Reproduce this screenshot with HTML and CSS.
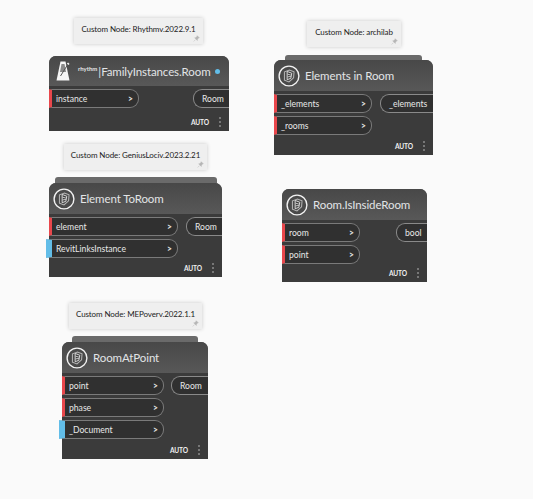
FILE: index.html
```html
<!DOCTYPE html>
<html lang="en">
<head>
    <meta charset="UTF-8">
    <meta name="viewport" content="width=device-width, initial-scale=1.0">
    <title>Room nodes</title>
    <link rel="stylesheet" href="styles.css">
</head>
<body>
    <svg class="defs" width="0" height="0">
        <symbol id="customIcon" viewBox="0 0 24 24">
            <circle cx="12" cy="12" r="10.8" fill="#4a4a4a" stroke="#f2f2f2" stroke-width="1.5"/>
            <path d="M7 7.5 L12.5 5.5 L17.5 7.5 L17 14 L12 18.5 L7 16.5 Z" fill="none" stroke="#b8b8b8" stroke-width="1.1"/>
            <path d="M10 7 L15 9 L14 14.5 L10 16 Z" fill="#3a3a3a" stroke="#e4e4e4" stroke-width="1"/>
            <path d="M10.5 10 L14 11 M10.5 13 L14 12.5" stroke="#e4e4e4" stroke-width="0.9"/>
        </symbol>
        <symbol id="pin" viewBox="0 0 10 10">
            <path d="M6 1 L9 4 L7.6 4.4 L6.2 6.6 L6.2 7.8 L2.4 4 L3.6 3.8 L5.6 2.4 Z M3.6 6.6 L1 9.2" fill="#b5b5b5" stroke="#b5b5b5" stroke-width="0.7"/>
        </symbol>
    </svg>

    <!-- Notes -->
    <div class="note note-rhythm">Custom Node: Rhythmv.2022.9.1<svg class="pin"><use href="#pin"/></svg></div>
    <div class="note note-archilab">Custom Node: archilab<svg class="pin"><use href="#pin"/></svg></div>
    <div class="note note-genius">Custom Node: GeniusLociv.2023.2.21<svg class="pin"><use href="#pin"/></svg></div>
    <div class="note note-mep">Custom Node: MEPoverv.2022.1.1<svg class="pin"><use href="#pin"/></svg></div>

    <!-- Nodes -->
    <div class="node node-rhythm">
        <div class="node-header">
            <svg class="metronome" viewBox="0 0 14 20">
                <path d="M4.5 0.5 L9.5 0.5 L13.5 19.5 L0.5 19.5 Z" fill="#f6f6f6"/>
                <path d="M5.5 3 L8.5 3 L10 11 L4 11 Z" fill="#8a8a8a"/>
                <path d="M4.5 15 L12 3" stroke="#555555" stroke-width="1"/>
                <path d="M11.5 2 L13 3.5" stroke="#f6f6f6" stroke-width="1.6"/>
            </svg>
            <span class="brand">rhythm</span>
            <span class="node-title">|FamilyInstances.Room</span>
            <span class="info-dot"></span>
        </div>
        <div class="node-body">
            <div class="inputs">
                <div class="port"><span>instance</span><b>&gt;</b></div>
            </div>
            <div class="output">Room</div>
        </div>
        <div class="node-footer"><span>AUTO</span><i class="dots"></i></div>
    </div>

    <div class="stack stack-archilab"></div>
    <div class="node node-archilab">
        <div class="node-header">
            <svg class="icon"><use href="#customIcon"/></svg>
            <span class="node-title">Elements in Room</span>
        </div>
        <div class="node-body">
            <div class="inputs">
                <div class="port"><span>_elements</span><b>&gt;</b></div>
                <div class="port"><span>_rooms</span><b>&gt;</b></div>
            </div>
            <div class="output">_elements</div>
        </div>
        <div class="node-footer"><span>AUTO</span><i class="dots"></i></div>
    </div>

    <div class="stack stack-genius"></div>
    <div class="node node-genius">
        <div class="node-header">
            <svg class="icon"><use href="#customIcon"/></svg>
            <span class="node-title">Element ToRoom</span>
        </div>
        <div class="node-body">
            <div class="inputs">
                <div class="port"><span>element</span><b>&gt;</b></div>
                <div class="port optional"><span>RevitLinksInstance</span><b>&gt;</b></div>
            </div>
            <div class="output">Room</div>
        </div>
        <div class="node-footer"><span>AUTO</span><i class="dots"></i></div>
    </div>

    <div class="node node-inside">
        <div class="node-header">
            <svg class="icon"><use href="#customIcon"/></svg>
            <span class="node-title">Room.IsInsideRoom</span>
        </div>
        <div class="node-body">
            <div class="inputs">
                <div class="port"><span>room</span><b>&gt;</b></div>
                <div class="port"><span>point</span><b>&gt;</b></div>
            </div>
            <div class="output">bool</div>
        </div>
        <div class="node-footer"><span>AUTO</span><i class="dots"></i></div>
    </div>

    <div class="stack stack-mep"></div>
    <div class="node node-mep">
        <div class="node-header">
            <svg class="icon"><use href="#customIcon"/></svg>
            <span class="node-title">RoomAtPoint</span>
        </div>
        <div class="node-body">
            <div class="inputs">
                <div class="port"><span>point</span><b>&gt;</b></div>
                <div class="port"><span>phase</span><b>&gt;</b></div>
                <div class="port optional"><span>_Document</span><b>&gt;</b></div>
            </div>
            <div class="output">Room</div>
        </div>
        <div class="node-footer"><span>AUTO</span><i class="dots"></i></div>
    </div>
</body>
</html>
```

FILE: styles.css
```css
body {
    margin: 0;
    width: 533px;
    height: 499px;
    position: relative;
    overflow: hidden;
    background-color: #fafafa;
    font-family: Lato, sans-serif;
}
.defs {
    position: absolute;
}

/* notes */
.note {
    position: absolute;
    box-sizing: border-box;
    height: 26px;
    padding-top: 5px;
    text-align: center;
    font-size: 8px;
    letter-spacing: -0.1px;
    line-height: 12px;
    color: #222222;
    background-color: #efefef;
    box-shadow: 0 0 4px rgba(0, 0, 0, 0.2);
    white-space: nowrap;
}
.pin {
    position: absolute;
    right: 3px;
    bottom: 2px;
    width: 7px;
    height: 7px;
}
.note-rhythm { left: 74px; top: 18px; width: 129px; }
.note-archilab { left: 307px; top: 21px; width: 94px; }
.note-genius { left: 64px; top: 144px; width: 143px; }
.note-mep { left: 69px; top: 303px; width: 133px; }

/* frozen stack edge above some nodes */
.stack {
    position: absolute;
    height: 6px;
    border-radius: 3px 3px 0 0;
    background-color: #6a6a6a;
}
.stack-archilab { left: 285px; top: 55px; width: 137px; }
.stack-genius { left: 55px; top: 177px; width: 162px; }
.stack-mep { left: 72px; top: 336px; width: 126px; }

/* nodes */
.node {
    position: absolute;
    display: flex;
    flex-direction: column;
    box-sizing: border-box;
    background-color: #3b3b3b;
    border-radius: 7px 7px 0 0;
    color: #f0f0f0;
}
.node-rhythm { left: 49px; top: 56px; width: 180px; height: 75px; }
.node-archilab { left: 274px; top: 60px; width: 159px; height: 95px; }
.node-genius { left: 49px; top: 183px; width: 173px; height: 94px; }
.node-inside { left: 282px; top: 189px; width: 145px; height: 93px; }
.node-mep { left: 62px; top: 342px; width: 146px; height: 117px; }

.node-header {
    display: flex;
    align-items: center;
    flex: none;
    height: 31px;
    padding-left: 4px;
    background: linear-gradient(#484848, #585858);
    border-radius: 7px 7px 0 0;
}
.node-rhythm .node-header {
    height: 30px;
}
.node-title {
    font-size: 11.5px;
    letter-spacing: -0.1px;
    color: #e2e4e6;
    white-space: nowrap;
}
.icon {
    flex: none;
    width: 22px;
    height: 22px;
    margin-right: 5px;
}
.metronome {
    flex: none;
    width: 14px;
    height: 20px;
    margin: 0 8px 0 3px;
}
.brand {
    font-size: 6px;
    font-weight: 700;
    margin: 0 1px 5px 0;
    color: #e4e4e4;
}
.info-dot {
    flex: none;
    width: 5px;
    height: 5px;
    margin-left: 4px;
    border-radius: 50%;
    background-color: #62bde8;
}

.node-body {
    display: flex;
    justify-content: space-between;
    align-items: flex-start;
    flex: 1;
    padding-top: 3px;
}
.inputs {
    display: flex;
    flex-direction: column;
    gap: 3px;
}
.port {
    display: flex;
    justify-content: space-between;
    align-items: center;
    box-sizing: border-box;
    height: 19px;
    padding: 0 5px 0 4px;
    border: 1px solid #7a7a7a;
    border-left: 3px solid #e8474c;
    border-radius: 0 9px 9px 0;
    background-color: #303030;
    font-size: 8.6px;
    color: #e8e8e8;
}
.port b {
    font-size: 8.5px;
}
.port.optional {
    margin-left: -3px;
    border-left: 6px solid #62bde8;
}
.output {
    box-sizing: border-box;
    height: 19px;
    padding: 0 0 0 8px;
    border: 1px solid #8a8a8a;
    border-right: none;
    border-radius: 9px 0 0 9px;
    background-color: #303030;
    font-size: 8.6px;
    line-height: 18px;
    color: #e8e8e8;
}
.node-rhythm .port { width: 90px; }
.node-archilab .port { width: 98px; }
.node-genius .port { width: 129px; }
.node-genius .port.optional { width: 132px; }
.node-inside .port { width: 78px; }
.node-mep .port { width: 102px; }
.node-mep .port.optional { width: 105px; }
.node-inside .output { width: 31px; }
.node-rhythm .output { width: 36px; }
.node-genius .output { width: 36px; }
.node-mep .output { width: 37px; }
.node-archilab .output { width: 53px; }

.node-footer {
    display: flex;
    justify-content: flex-end;
    align-items: center;
    flex: none;
    height: 18px;
    padding-right: 8px;
    font-size: 6.6px;
    letter-spacing: -0.1px;
    font-weight: 700;
}
.dots {
    width: 2px;
    height: 2px;
    margin: 0 0 0 10px;
    border-radius: 50%;
    background-color: #8c8c8c;
    box-shadow: 0 -4px 0 #8c8c8c, 0 4px 0 #8c8c8c;
}
```
